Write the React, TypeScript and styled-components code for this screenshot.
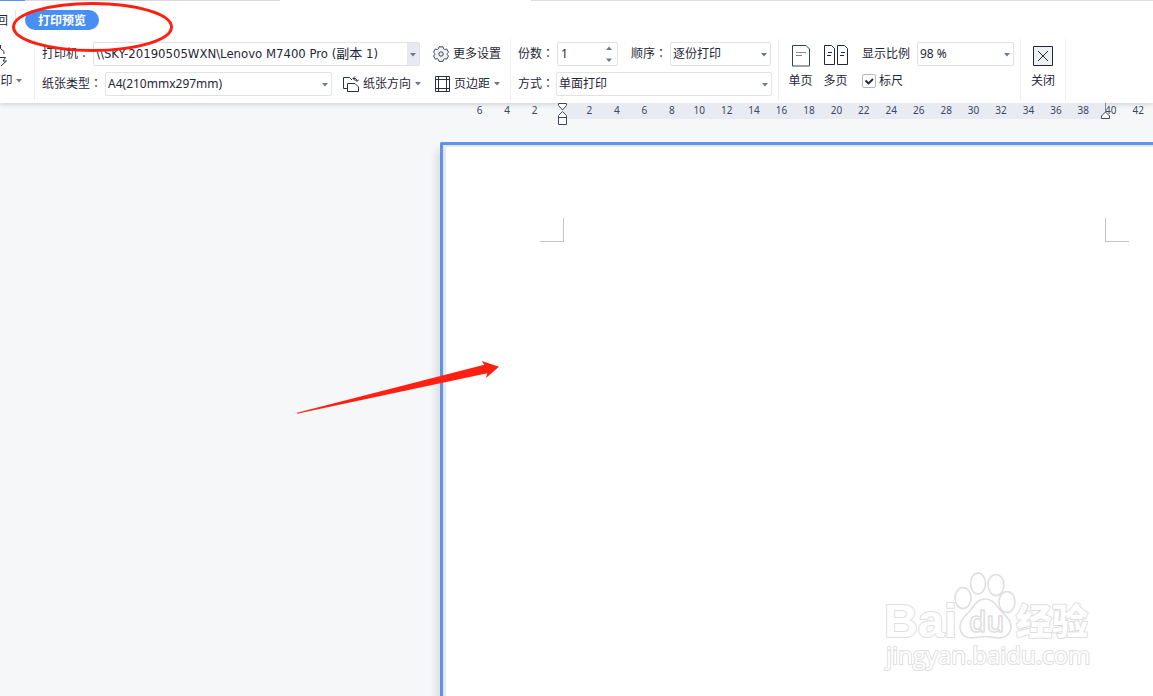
import React from "react";
import styled, { createGlobalStyle } from "styled-components";

const Global = createGlobalStyle`
  * { box-sizing: border-box; }
  body { margin: 0; background: #f5f7f9; overflow: hidden; }
  body, button, input, select {
    font-family: "Noto Sans", "Noto Sans CJK SC", sans-serif;
    font-size: 12px;
    line-height: 18px;
    color: #1f2837;
  }
`;

const Screen = styled.div`
  position: relative;
  display: flex;
  flex-direction: column;
  min-height: 100vh;
  overflow: hidden;
`;

const Ribbon = styled.header`
  position: relative;
  background: #fff;
  box-shadow: 0 1px 5px rgba(40, 50, 70, 0.22);
`;

const TabEdges = styled.div`
  display: flex;
  height: 1px;
`;

const Edge = styled.i<{ $width?: number; $color: string }>`
  flex: ${(p) => (p.$width ? `0 0 ${p.$width}px` : "1")};
  background: ${(p) => p.$color};
`;

const Tabs = styled.nav`
  display: flex;
  align-items: center;
  height: 38px;
  white-space: nowrap;
`;

const BackTab = styled.button`
  width: 16px;
  height: 20px;
  padding: 2px 7px 0 0;
  border: 0;
  border-right: 1px solid #e2e4e8;
  background: none;
  display: flex;
  justify-content: flex-end;
`;

const ActiveTab = styled.button`
  height: 20px;
  margin-left: 9px;
  padding: 2px 13px 0;
  border: 0;
  border-radius: 10px;
  background: #488ff5;
  color: #fff;
  font-weight: 600;
`;

const Toolbar = styled.div`
  display: flex;
  height: 64px;
  white-space: nowrap;
`;

const Group = styled.section<{ $width: number; $left?: number }>`
  flex: 0 0 ${(p) => p.$width}px;
  height: 62px;
  padding-left: ${(p) => p.$left ?? 0}px;
  border-right: 1px solid #eef0f2;
`;

const StackGroup = styled(Group)`
  display: flex;
  flex-direction: column;
`;

const WideGroup = styled(Group)`
  display: flex;
`;

const PrintGroup = styled(Group)`
  display: flex;
  overflow: hidden;
`;

const Row = styled.div<{ $height?: number }>`
  display: flex;
  align-items: center;
  height: ${(p) => p.$height ?? 30}px;
`;

const Label = styled.label<{ $width: number; $left?: number }>`
  flex: 0 0 ${(p) => p.$width}px;
  margin-left: ${(p) => p.$left ?? 0}px;
`;

const Colon = styled.span`
  font-family: "Noto Sans CJK TC", sans-serif;
  line-height: 1;
`;

const SelectFrame = styled.span<{ $width: number; $shaded?: boolean }>`
  position: relative;
  display: flex;
  flex: 0 0 ${(p) => p.$width}px;
  height: 24px;
  border: 1px solid #e0e2e6;
  border-radius: 2px;
  background: ${(p) =>
    p.$shaded ? "linear-gradient(#e6e9ef, #e6e9ef) right / 12px 100% no-repeat #fff" : "#fff"};
`;

const Select = styled.select<{ $wide?: boolean }>`
  appearance: none;
  width: 100%;
  padding: 0 12px 0 2px;
  border: 0;
  outline: 0;
  background: none;
  ${(p) => p.$wide && `font-family: "DejaVu Sans Condensed", "Noto Sans CJK SC", sans-serif; font-size: 13px;`}
`;

const SelectArrow = styled.svg`
  position: absolute;
  right: 3px;
  top: 10px;
  pointer-events: none;
`;

const Tool = styled.button<{ $left: number; $gap: number }>`
  display: flex;
  align-items: center;
  gap: ${(p) => p.$gap}px;
  margin-left: ${(p) => p.$left}px;
  padding: 0;
  border: 0;
  background: none;
`;

const TallTool = styled.button<{ $width: number; $left?: number }>`
  display: flex;
  flex: 0 0 ${(p) => p.$width}px;
  flex-direction: column;
  align-items: center;
  gap: 5px;
  height: 60px;
  margin-left: ${(p) => p.$left ?? 0}px;
  padding: 6px 0 0;
  border: 0;
  background: none;
`;

const TallLabel = styled.span`
  display: flex;
  align-items: center;
  gap: 3px;
`;

const ViewOptions = styled.div`
  margin-left: 9px;
`;

const Spinner = styled.span`
  display: flex;
  align-items: center;
  width: 61px;
  height: 24px;
  padding-right: 5px;
  border: 1px solid #e0e2e6;
  border-radius: 2px;
`;

const SpinnerInput = styled.input`
  flex: 1;
  min-width: 0;
  padding: 0 0 0 3px;
  border: 0;
  outline: 0;
  background: none;
`;

const CheckLabel = styled.label`
  display: flex;
  align-items: center;
  gap: 3px;
`;

const Checkbox = styled.input`
  appearance: none;
  width: 14px;
  height: 14px;
  margin: 0;
  border: 1px solid #b4b8c0;
  border-radius: 2px;
  background: #fff
    url("data:image/svg+xml,%3Csvg xmlns='http://www.w3.org/2000/svg' viewBox='0 0 12 12'%3E%3Cpath d='M2.5 5.5l3 3 4.500-4.500' fill='none' stroke='%231f2837' stroke-width='1.800'/%3E%3C/svg%3E")
    center / 12px no-repeat;
`;

const Workspace = styled.main`
  display: flex;
  flex: 1;
  flex-direction: column;
`;

const Ruler = styled.div`
  position: relative;
  display: flex;
  width: 686px;
  height: 16px;
  margin-left: 466px;
  background: linear-gradient(#e8ebf1, #e8ebf1) 96px 0 / 543px 100% no-repeat;
`;

const Tick = styled.span`
  flex: 1 1 0;
  text-align: center;
  font-family: "Noto Sans", sans-serif;
  font-size: 10px;
  line-height: 15px;
  color: #3c475e;
`;

const Marker = styled.svg<{ $x: number }>`
  position: absolute;
  left: ${(p) => p.$x}px;
  top: 0;
`;

const Sheet = styled.article`
  flex: 1;
  margin: 23px 0 0 440px;
  border-top: 3px solid #5f93e8;
  border-left: 3px solid #5f93e8;
  border-top-left-radius: 2px;
  background: #fff;
  box-shadow: inset 3px 2px 0 #e6e7e8, -3px 8px 9px rgba(60, 60, 60, 0.16);
`;

const CropMarks = styled.div`
  display: flex;
  gap: 541px;
  padding: 73px 0 0 97px;
`;

const CropMark = styled.i<{ $side: "left" | "right" }>`
  flex: 0 0 24px;
  height: 24px;
  border-bottom: 1px solid #c3c5c5;
  border-${(p) => (p.$side === "left" ? "right" : "left")}: 1px solid #c3c5c5;
`;

const Annotation = styled.svg<{ $x: number; $y: number }>`
  position: absolute;
  left: ${(p) => p.$x}px;
  top: ${(p) => p.$y}px;
  pointer-events: none;
`;

const Caret = () => (
  <svg width="6" height="4" viewBox="0 0 6 4" aria-hidden="true">
    <path d="M0 0h6L3 3.500z" fill="#6d7890" />
  </svg>
);

function Dropdown(props: { id: string; width: number; value: string; shaded?: boolean }) {
  return (
    <SelectFrame $width={props.width} $shaded={props.shaded}>
      <Select id={props.id} $wide={props.shaded}>
        <option>{props.value}</option>
      </Select>
      <SelectArrow width="6" height="4" viewBox="0 0 6 4">
        <path d="M0 0h6L3 3.500z" fill="#6d7890" />
      </SelectArrow>
    </SelectFrame>
  );
}

function FieldLabel(props: { htmlFor: string; width: number; left?: number; text: string }) {
  return (
    <Label htmlFor={props.htmlFor} $width={props.width} $left={props.left}>
      {props.text}
      <Colon>：</Colon>
    </Label>
  );
}

const PrinterIcon = () => (
  <svg width="24" height="22" viewBox="0 0 24 22" fill="none" stroke="#283246">
    <path d="M7.500 0v3.500l3.500 3V9M6 12.500h6.500L10 16h3.500L8 21" />
  </svg>
);

const GearIcon = () => (
  <svg width="16" height="16" viewBox="0 0 16 16" fill="none" stroke="#3a465c">
    <path
      fill="#f1f2f4"
      strokeLinejoin="round"
      d="M6 .8h4l.6 2 1.100.7 2-.5 1.800 3.200-1.300 1.500v.8l1.300 1.500-1.800 3.200-2-.5-1.100.7-.6 2H6l-.6-2-1.100-.7-2 .5L.5 10l1.300-1.500v-.8L.5 6.200 2.300 3l2 .5 1.100-.7z"
    />
    <circle cx="8" cy="8" r="2.200" />
  </svg>
);

const OrientationIcon = () => (
  <svg width="16" height="16" viewBox="0 0 16 16" fill="none" stroke="#283246">
    <path d="M4 12.500H.5v-11h6l2.500 2.500" />
    <path d="M4.500 7.500H12l3.500 3.500v4.500h-11z" />
    <path d="M10 2.500h2q2 0 2 2.500M12 .5l-2 2 2 2M12 3.500l2 2 2-2" />
  </svg>
);

const MarginsIcon = () => (
  <svg width="15" height="16" viewBox="0 0 15 16" fill="none" stroke="#283246">
    <path d="M.5.5h14v15H.5zM3.500 0v16M11.500 0v16M0 3.500h15M0 12.500h15" />
  </svg>
);

const SinglePageIcon = () => (
  <svg width="24" height="22" viewBox="0 0 24 22" fill="none" stroke="#34415a">
    <path d="M3.500.5H17l3.500 3.500v17h-17z" />
    <path d="M7 7.500h10M7 10.500h6" stroke="#8089a0" />
  </svg>
);

const MultiPageIcon = () => (
  <svg width="24" height="22" viewBox="0 0 24 22" fill="none" stroke="#20293a">
    <path d="M.5.5H7.500L10.500 3.500v16H.5zM13.500.5h7l3 3v16h-10zM4 7.500h4M3 10.500h4M17 7.500h4M16 10.500h4" />
  </svg>
);

const CloseIcon = () => (
  <svg width="20" height="22" viewBox="0 0 20 22" fill="none" stroke="#20293a">
    <path d="M.5 1.500h19v19H.5z" fill="#eef0f2" />
    <path d="M5 6l10 10M15 6L5 16" />
  </svg>
);

const TICKS = [6, 4, 2, 0, ...Array.from({ length: 21 }, (_, i) => (i + 1) * 2)];

export default function App() {
  return (
    <Screen>
      <Global />
      <Ribbon>
        <TabEdges>
          <Edge $width={25} $color="#5c8ff0" />
          <Edge $width={255} $color="#d8dade" />
          <Edge $width={251} $color="#fff" />
          <Edge $color="#dcdee4" />
        </TabEdges>
        <Tabs>
          <BackTab>返回</BackTab>
          <ActiveTab>打印预览</ActiveTab>
        </Tabs>
        <Toolbar>
          <PrintGroup $width={35}>
            <TallTool $width={34} $left={-12}>
              <PrinterIcon />
              <TallLabel>
                打印
                <Caret />
              </TallLabel>
            </TallTool>
          </PrintGroup>
          <StackGroup $width={476} $left={7}>
            <Row>
              <FieldLabel htmlFor="printer" width={51} text="打印机" />
              <Dropdown id="printer" width={327} shaded value="\\SKY-20190505WXN\Lenovo M7400 Pro (副本 1)" />
              <Tool $left={13} $gap={4}>
                <GearIcon />
                更多设置
              </Tool>
            </Row>
            <Row>
              <FieldLabel htmlFor="paper" width={63} text="纸张类型" />
              <Dropdown id="paper" width={227} value="A4(210mmx297mm)" />
              <Tool $left={11} $gap={4}>
                <OrientationIcon />
                纸张方向
                <Caret />
              </Tool>
              <Tool $left={14} $gap={4}>
                <MarginsIcon />
                页边距
                <Caret />
              </Tool>
            </Row>
          </StackGroup>
          <StackGroup $width={268} $left={7}>
            <Row>
              <FieldLabel htmlFor="copies" width={39} text="份数" />
              <Spinner>
                <SpinnerInput id="copies" defaultValue="1" />
                <svg width="6" height="16" viewBox="0 0 6 16" fill="#6d7890">
                  <path d="M0 4h6L3 .5zM0 12.500h6L3 16z" />
                </svg>
              </Spinner>
              <FieldLabel htmlFor="order" width={39} left={13} text="顺序" />
              <Dropdown id="order" width={101} value="逐份打印" />
            </Row>
            <Row>
              <FieldLabel htmlFor="mode" width={38} text="方式" />
              <Dropdown id="mode" width={216} value="单面打印" />
            </Row>
          </StackGroup>
          <WideGroup $width={242} $left={4}>
            <TallTool $width={35}>
              <SinglePageIcon />
              单页
            </TallTool>
            <TallTool $width={35}>
              <MultiPageIcon />
              多页
            </TallTool>
            <ViewOptions>
              <Row>
                <Label htmlFor="zoom" $width={55}>显示比例</Label>
                <Dropdown id="zoom" width={97} value="98 %" />
              </Row>
              <Row $height={24}>
                <CheckLabel>
                  <Checkbox type="checkbox" defaultChecked />
                  标尺
                </CheckLabel>
              </Row>
            </ViewOptions>
          </WideGroup>
          <WideGroup $width={45}>
            <TallTool $width={44}>
              <CloseIcon />
              关闭
            </TallTool>
          </WideGroup>
        </Toolbar>
      </Ribbon>
      <Workspace>
        <Ruler>
          {TICKS.map((n, i) => (
            <Tick key={i}>{n === 0 ? "" : n}</Tick>
          ))}
          <Marker $x={92} width="9" height="22" viewBox="0 0 9 22" fill="#fff" stroke="#3c4860">
            <path d="M.5.5h8v2L4.500 7 .5 2.500zM.5 21.500v-9l4-4 4 4v9zM.5 14.500h8" />
          </Marker>
          <Marker $x={635} width="9" height="16" viewBox="0 0 9 16" fill="#fff" stroke="#3c4860">
            <path d="M4.500 0v9" stroke="#8088a8" />
            <path d="M.5 15.500V13l4-4 4 4v2.500z" />
          </Marker>
        </Ruler>
        <Sheet>
          <CropMarks>
            <CropMark $side="left" />
            <CropMark $side="right" />
          </CropMarks>
        </Sheet>
      </Workspace>
      <Annotation $x={10} $y={0} width="166" height="56" fill="none" stroke="#ff2012" strokeWidth="3">
        <ellipse cx="82.500" cy="27" rx="79" ry="23.500" />
      </Annotation>
      <Annotation $x={290} $y={355} width="214" height="64" fill="#ff2012">
        <path d="M7 57.700L194.300 9.700 191.700 6 209 11.700 196 23l1.300-4.700L7 58.700z" />
      </Annotation>
      <Annotation
        $x={880}
        $y={568}
        width="216"
        height="108"
        fill="#fff"
        stroke="#dedede"
        strokeWidth="2"
        strokeLinejoin="round"
        fontFamily='"Open Sans", "Noto Sans CJK SC", sans-serif'
      >
        <g paintOrder="stroke">
          <text x="4" y="69" fontSize="47" fontWeight="700" fontFamily='"Liberation Sans", sans-serif'>Bai</text>
          <text x="136" y="67" fontSize="36" fontWeight="900">经验</text>
          <text x="6" y="96" fontSize="24">jingyan.baidu.com</text>
        </g>
        <g strokeWidth="1.500">
          <ellipse cx="83" cy="30" rx="8" ry="10.500" />
          <ellipse cx="98" cy="15.500" rx="7.500" ry="10.500" />
          <ellipse cx="116" cy="17" rx="8" ry="10.500" />
          <ellipse cx="127" cy="34" rx="8" ry="10.500" />
          <path d="M105 31c9 0 11 7 17 13s9 9 9 15-5 11-12 11c-5 0-9-1.500-14-1.500S96 70 91 70c-7 0-11-5-11-11s3-9 8-14 8-14 17-14z" />
        </g>
        <text x="89" y="64" fontSize="28" strokeWidth="1.500" fontWeight="600">du</text>
      </Annotation>
    </Screen>
  );
}
